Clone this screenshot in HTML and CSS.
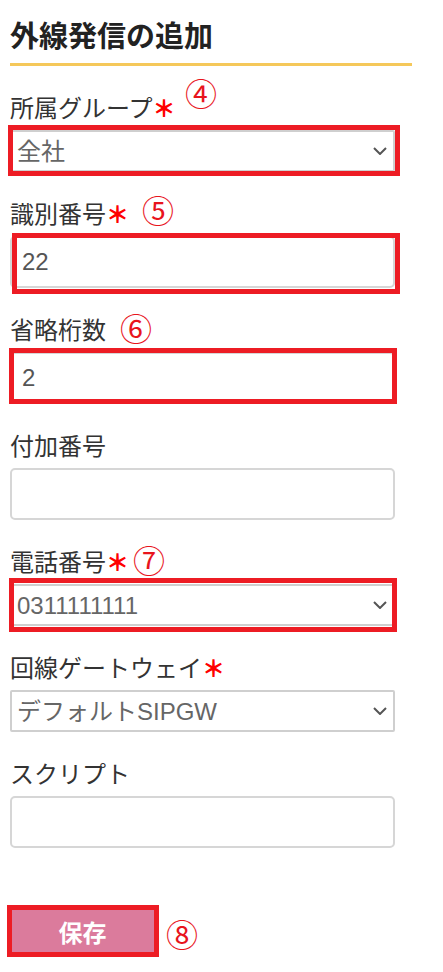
FILE: index.html
```html
<!DOCTYPE html>
<html lang="ja">
<head>
  <meta charset="UTF-8" />
  <meta name="viewport" content="width=device-width, initial-scale=1.0"/>
  <title>外線発信の追加</title>
  <link rel="stylesheet" href="styles.css">
</head>
<body>
  <div class="page">
    <!-- Heading with yellow rule -->
    <h1 class="title">外線発信の追加</h1>

    <form class="form">
      <!-- Group -->
      <div class="group">
        <label class="label">所属グループ<span class="req">＊</span></label>
        <span class="mark mark-4">④</span>
        <div class="field-wrap">
          <select class="select"><option>全社</option></select>
          <svg class="chevron" width="14" height="8" viewBox="0 0 14 8"><path d="M1 1l6 6 6-6" fill="none" stroke="#555" stroke-width="2"/></svg>
          <span class="hl hl-1"></span>
        </div>
      </div>

      <!-- Identifier -->
      <div class="group">
        <label class="label">識別番号<span class="req">＊</span></label>
        <span class="mark mark-5">⑤</span>
        <div class="field-wrap">
          <input class="input" type="text" value="22">
          <span class="hl hl-2"></span>
        </div>
      </div>

      <!-- Digits to drop -->
      <div class="group">
        <label class="label">省略桁数</label>
        <span class="mark mark-6">⑥</span>
        <div class="field-wrap">
          <input class="input" type="text" value="2">
          <span class="hl hl-3"></span>
        </div>
      </div>

      <div class="group">
        <label class="label">付加番号</label>
        <div class="field-wrap">
          <input class="input" type="text" value="">
        </div>
      </div>

      <!-- Phone number -->
      <div class="group">
        <label class="label">電話番号<span class="req">＊</span></label>
        <span class="mark mark-7">⑦</span>
        <div class="field-wrap">
          <select class="select"><option>0311111111</option></select>
          <svg class="chevron" width="14" height="8" viewBox="0 0 14 8"><path d="M1 1l6 6 6-6" fill="none" stroke="#555" stroke-width="2"/></svg>
          <span class="hl hl-5"></span>
        </div>
      </div>

      <div class="group">
        <label class="label">回線ゲートウェイ<span class="req">＊</span></label>
        <div class="field-wrap">
          <select class="select"><option>デフォルトSIPGW</option></select>
          <svg class="chevron" width="14" height="8" viewBox="0 0 14 8"><path d="M1 1l6 6 6-6" fill="none" stroke="#555" stroke-width="2"/></svg>
        </div>
      </div>

      <div class="group">
        <label class="label">スクリプト</label>
        <div class="field-wrap">
          <input class="input" type="text" value="">
        </div>
      </div>

      <!-- Save -->
      <div class="actions">
        <button class="save" type="button">保存</button>
        <span class="hl hl-btn"></span>
        <span class="mark mark-8">⑧</span>
      </div>
    </form>
  </div>
</body>
</html>
```

FILE: styles.css
```css
* {
  box-sizing: border-box;
  margin: 0;
  padding: 0;
}

body {
  font-family: "Noto Sans CJK JP", "Liberation Sans", sans-serif;
  background: #fff;
  color: #333;
}

.page {
  padding: 16px 0 20px 10px;
  width: 412px;
}

/* Heading */
.title {
  font-size: 29px;
  line-height: 36px;
  font-weight: 700;
  color: #222;
  padding-bottom: 11px;
  border-bottom: 3px solid #f5c85a;
}

.form {
  margin-top: 26px;
  width: 385px;
}

.group {
  position: relative;
  margin-bottom: 26px;
}

.label {
  display: block;
  font-size: 24px;
  line-height: 30px;
  color: #333;
  margin-bottom: 8px;
  white-space: nowrap;
}

.req {
  color: #f00;
  font-weight: 900;
  font-size: 23px;
}

.field-wrap {
  position: relative;
}

/* Inputs */
.input {
  display: block;
  width: 100%;
  height: 52px;
  border: 2px solid #d6d6d6;
  border-radius: 5px;
  padding: 0 10px;
  font-family: "Liberation Sans", "Noto Sans CJK JP", sans-serif;
  font-size: 24px;
  color: #555;
  background: #fff;
  outline: none;
}

/* Selects */
.select {
  display: block;
  width: 100%;
  height: 42px;
  border: 2px solid #cfcfcf;
  border-radius: 2px;
  padding: 0 30px 0 5px;
  font-family: "Liberation Sans", "Noto Sans CJK JP", sans-serif;
  font-size: 24px;
  color: #666;
  background: #fff;
  appearance: none;
  -webkit-appearance: none;
  outline: none;
}

.chevron {
  position: absolute;
  right: 8px;
  top: 17px;
  pointer-events: none;
}

/* Save button */
.actions {
  position: relative;
  margin-top: 62px;
  width: 145px;
}

.save {
  display: block;
  width: 145px;
  height: 42px;
  border: none;
  background-color: #db7b9c;
  color: #fff;
  font-family: "Noto Sans CJK JP", sans-serif;
  font-size: 24px;
  font-weight: 700;
}

/* Red annotation boxes */
.hl {
  position: absolute;
  border: 5px solid #ed1c24;
  pointer-events: none;
}
.hl-1 { top: -5px; left: -2px; right: -5px; bottom: -4px; }
.hl-2 { top: -3px; left: 2px; right: -5px; bottom: -6px; }
.hl-3 { top: -4px; left: -1px; right: -2px; bottom: 0; }
.hl-5 { top: -6px; left: -1px; right: -2px; bottom: -6px; }
.hl-btn { top: -5px; left: -3px; right: -4px; bottom: -5px; }

/* Circled annotation numbers */
.mark {
  position: absolute;
  font-family: "Noto Sans CJK JP", sans-serif;
  font-size: 32px;
  line-height: 1;
  color: #e8141c;
  white-space: nowrap;
}
.mark-4 { left: 175px; top: -16px; }
.mark-5 { left: 132px; top: -5px; }
.mark-6 { left: 110px; top: -3px; }
.mark-7 { left: 123px; top: -3px; }
.mark-8 { left: 156px; top: 7px; }
```
